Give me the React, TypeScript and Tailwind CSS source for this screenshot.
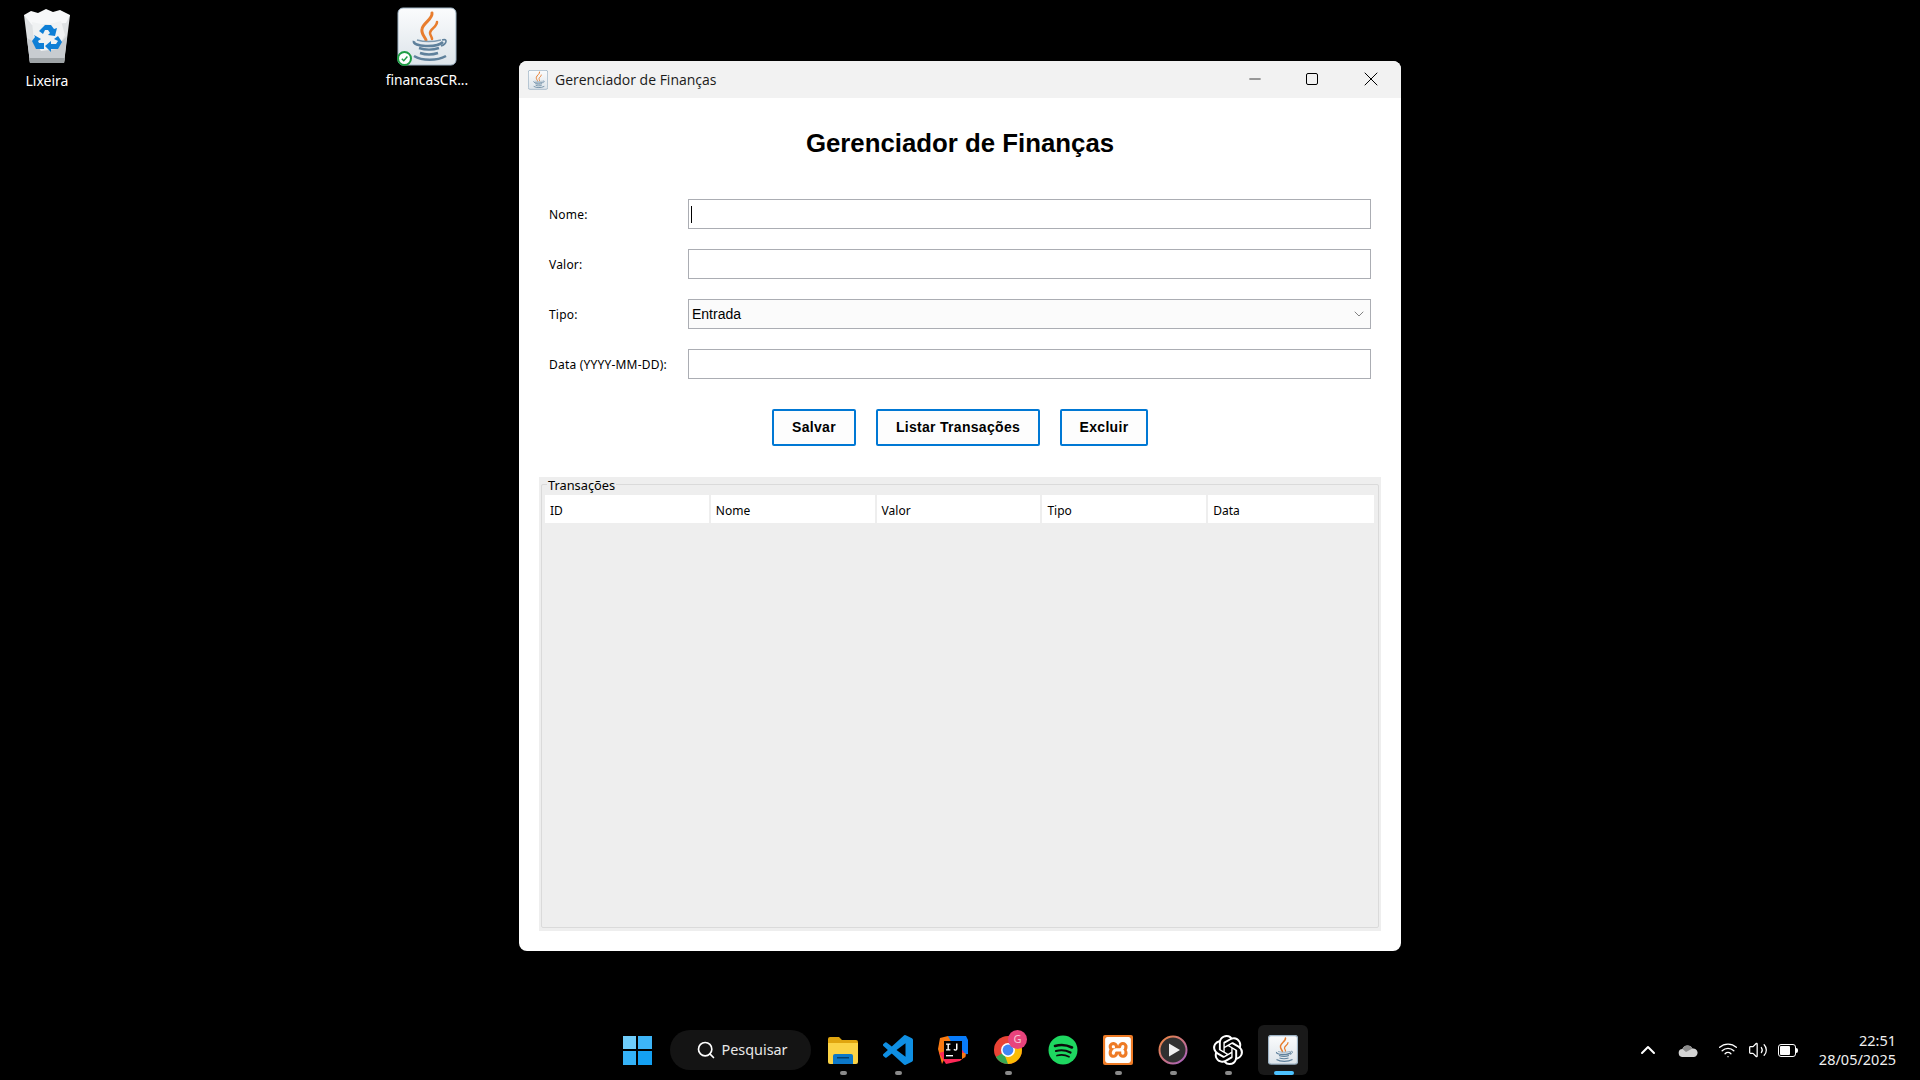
import React from "react";
import { SiOpenai, SiXampp } from "react-icons/si";
import { Search, ChevronDown, Minus, X, Volume2, Wifi, ChevronUp } from "lucide-react";

const JavaTile = ({ size }: { size: number }) => (
  <svg width={size} height={size} viewBox="0 0 60 60">
    <defs>
      <linearGradient id="javaBg" x1="0" y1="0" x2="0" y2="1">
        <stop offset="0" stopColor="#fbfcfd" />
        <stop offset="1" stopColor="#dde4ea" />
      </linearGradient>
    </defs>
    <rect x="1" y="1" width="58" height="57" rx="5" fill="url(#javaBg)" stroke="#9fb4c5" strokeWidth={size < 40 ? 2.5 : 1} />
    <path d="M35 6C36 12 26 16 25 22 24 27 28 30 29 33" fill="none" stroke="#e87d2e" strokeWidth="3" strokeLinecap="round" />
    <path d="M40 15C40 20 33 22 33 26 33 28 35 30 35 32" fill="none" stroke="#e87d2e" strokeWidth="2.500" strokeLinecap="round" />
    <path d="M17 34C15 40 40 41 46 35" fill="none" stroke="#5f819c" strokeWidth="2.600" />
    <path d="M20 33C27 35 36 35 44 33" fill="none" stroke="#7e9ab0" strokeWidth="1.500" />
    <path d="M45 33C51 31 50 37 44 39" fill="none" stroke="#5f819c" strokeWidth="1.600" />
    <path d="M22 41C28 43 36 43 42 41" fill="none" stroke="#5f819c" strokeWidth="2.400" />
    <path d="M23 46C29 48 35 48 41 46" fill="none" stroke="#5f819c" strokeWidth="2.400" />
    <path d="M17 49C25 54 40 54 49 49" fill="none" stroke="#5f819c" strokeWidth="2.400" />
  </svg>
);

const RecycleBin = () => (
  <svg width="46" height="56" viewBox="0 0 46 56">
    <path d="M0 7 6 55h34l6-48z" fill="#dfe2e4" />
    <path d="M0 7l7-4 7 2 8-4 7 3 7-2 10 5-4 8-34 2z" fill="#f7f8f9" />
    <path d="M3 30 6 55h34l3-27-12 12-14-2z" fill="#c8ccd0" />
    <path d="M5 50h36l-1 5H6z" fill="#9ea3a6" />
    <path d="M8 14l14 3 15-4 4 14-8 14-16 2-7-10z" fill="#f0f2f3" />
    <path d="M15 23 21 17H27L30 21 33 20 31 28 24 27 26 25 24 22H21L19 26z" fill="#0f7fd6" />
    <path d="M10 27 17 31 14 33 15 35H20V41H12L8 33 11 29z" fill="#0f7fd6" />
    <path d="M34 28 38 34 34 41H27V44L21 38 27 33V36H32L34 33 30 31z" fill="#0f7fd6" />
  </svg>
);

const Chrome = () => (
  <svg width="30" height="30" viewBox="0 0 30 30">
    <circle cx="15" cy="15" r="14" fill="#ea4335" />
    <path d="M15 15 2.900 22A14 14 0 0 0 15 29l6-12z" fill="#34a853" />
    <path d="M15 15 27.100 8A14 14 0 0 1 15 29l-3-8z" fill="#fbbc04" />
    <circle cx="15" cy="15" r="7" fill="#fff" />
    <circle cx="15" cy="15" r="5.400" fill="#4285f4" />
  </svg>
);

const Spotify = () => (
  <svg width="30" height="30" viewBox="0 0 30 30">
    <circle cx="15" cy="15" r="14.500" fill="#1ed760" />
    <path d="M7 11c5-1.500 12-1 17 1.500" stroke="#0b0b0b" strokeWidth="2.600" fill="none" strokeLinecap="round" />
    <path d="M8 16c4.500-1.200 10-.8 14.500 1.500" stroke="#0b0b0b" strokeWidth="2.200" fill="none" strokeLinecap="round" />
    <path d="M9 20.500c4-1 8.500-.6 12 1.200" stroke="#0b0b0b" strokeWidth="1.800" fill="none" strokeLinecap="round" />
  </svg>
);

const Intellij = () => (
  <svg width="30" height="30" viewBox="0 0 30 30">
    <path d="M2 3 10 1l6 3L4 29 0 14z" fill="#f97a12" />
    <path d="M10 1h18l2 4v14l-10 1z" fill="#087cfa" />
    <path d="M1 18l7 11 14-3 6-6-6-8z" fill="#fe2857" />
    <path d="M22 18h5.500v4L22 25z" fill="#f97a12" />
    <rect x="6" y="6" width="18" height="18" fill="#000" />
    <rect x="8" y="20" width="7" height="1.400" fill="#fff" />
    <path d="M8 8.500h4.400v1.200h-1.500v4.600h1.500v1.200H8v-1.200h1.500V9.700H8zM18 8.500h1.500v5.300c0 1.300-.8 1.900-2 1.900-1 0-1.700-.4-2.100-1l1-.9c.3.400.6.600 1 .6.300 0 .6-.2.600-.7z" fill="#fff" />
  </svg>
);

const MediaPlayer = () => (
  <svg width="30" height="30" viewBox="0 0 30 30">
    <defs>
      <linearGradient id="mediaRing" x1="0" y1="0" x2="1" y2="1">
        <stop offset="0" stopColor="#f0883e" />
        <stop offset="1" stopColor="#a45fc4" />
      </linearGradient>
    </defs>
    <circle cx="15" cy="15" r="13.500" fill="#303030" stroke="url(#mediaRing)" strokeWidth="2" />
    <path d="M11 8.500 22 15l-11 6.500z" fill="#eeeeee" />
  </svg>
);

const Slot = ({ dot, active, children }: { dot?: boolean; active?: boolean; children: React.ReactNode }) => (
  <div className="relative flex h-[50px] w-[55px] items-center justify-center">
    {active && <div className="absolute left-[2.5px] top-0 h-[50px] w-[50px] rounded-md bg-[#191919]" />}
    <div className="relative flex items-center justify-center">{children}</div>
    {dot && <div className="absolute bottom-0 left-[24px] h-[4px] w-[7px] rounded-full bg-[#8a8a8a]" />}
    {active && <div className="absolute bottom-0 left-[18px] h-[4px] w-[20px] rounded-full bg-[#4cc2ff]" />}
  </div>
);

const Field = ({ label, children }: { label: string; children: React.ReactNode }) => (
  <div className="flex h-[30px] items-center">
    <span className="w-[139px] pt-[1px] font-['Noto_Sans',sans-serif] text-[12px] tracking-[0.2px] text-black">{label}</span>
    {children}
  </div>
);

const ActionButton = ({ label, width }: { label: string; width: string }) => (
  <button className={`${width} h-[37px] rounded-[2px] border-2 border-[#0078d4] bg-[#fdfdfd] font-['Liberation_Sans',sans-serif] text-[14px] font-bold tracking-[0.3px] text-black`}>
    {label}
  </button>
);

export default function App() {
  return (
    <div className="flex h-screen w-full flex-col overflow-hidden bg-black font-['Noto_Sans',sans-serif]">
      <div className="relative flex-1">
        <div className="absolute left-[1px] top-[8px] flex w-[92px] flex-col items-center">
          <RecycleBin />
          <span className="mt-[8px] text-[14px] leading-[18px] text-white">Lixeira</span>
        </div>
        <div className="absolute left-[377px] top-[7px] flex w-[100px] flex-col items-center">
          <div className="relative h-[60px] w-[60px]">
            <JavaTile size={60} />
            <div className="absolute bottom-[1px] left-0 flex h-[15px] w-[15px] items-center justify-center rounded-full border-2 border-[#1f9d45] bg-white">
              <svg width="9" height="9" viewBox="0 0 10 10">
                <path d="M2 5.200 4.200 7.400 8.200 2.800" fill="none" stroke="#1f9d45" strokeWidth="1.600" />
              </svg>
            </div>
          </div>
          <span className="mt-[4px] text-[13.8px] leading-[18px] text-white">financasCR...</span>
        </div>

        {/* janela */}
        <div className="absolute left-[519px] top-[61px] flex h-[890px] w-[882px] flex-col overflow-hidden rounded-lg bg-white">
          <div className="flex h-[37px] shrink-0 items-center bg-[#f2f2f2] pl-[9px]">
            <JavaTile size={20} />
            <span className="ml-[7px] font-['Open_Sans',sans-serif] text-[14px] text-[#1a1a1a]">Gerenciador de Finanças</span>
            <div className="ml-auto mb-[2px] flex items-center">
              <Minus className="mr-[42px] h-[18px] w-[18px] text-black" strokeWidth={1} />
              <div className="mr-[41px] h-[12px] w-[12px] rounded-[2px] border border-black" />
              <X className="mr-[18px] h-[24px] w-[24px] text-black" strokeWidth={1} />
            </div>
          </div>

          <div className="flex flex-1 flex-col">
            <h1 className="mt-[26px] mb-[37px] text-center font-['Liberation_Sans',sans-serif] text-[25.8px] font-bold leading-[38px] text-black">
              Gerenciador de Finanças
            </h1>

            <div className="flex flex-col gap-5 px-[30px]">
              <Field label="Nome:">
                <div className="flex h-[30px] flex-1 items-center border border-[#abadb3] bg-white pl-[2px]">
                  <div className="h-[17px] w-px bg-black" />
                </div>
              </Field>
              <Field label="Valor:">
                <div className="h-[30px] flex-1 border border-[#abadb3] bg-white" />
              </Field>
              <Field label="Tipo:">
                <div className="flex h-[30px] flex-1 items-center justify-between border border-[#abadb3] bg-[#fbfbfb] pl-[3px] pr-[3px] font-['Liberation_Sans',sans-serif] text-[14px] text-black">
                  Entrada
                  <ChevronDown className="h-[16px] w-[16px] text-[#555555]" strokeWidth={1.1} />
                </div>
              </Field>
              <Field label="Data (YYYY-MM-DD):">
                <div className="h-[30px] flex-1 border border-[#abadb3] bg-white" />
              </Field>
            </div>

            <div className="mt-[30px] flex justify-center gap-5">
              <ActionButton label="Salvar" width="w-[84px]" />
              <ActionButton label="Listar Transações" width="w-[164px]" />
              <ActionButton label="Excluir" width="w-[88px]" />
            </div>

            <div className="mx-[20px] mt-[31px] flex h-[454px] flex-col bg-[#eeeeee] pb-[3px] pl-[2px] pr-[2px] pt-[7px]">
              <div className="relative flex-1 rounded-[2px] border border-[#dadada] pl-[3px] pr-[4px] pt-[10px]">
                <span className="absolute left-[5px] top-[-8px] bg-[#eeeeee] px-[1px] text-[12.8px] leading-[17px] text-black">Transações</span>
                <div className="grid h-[28px] grid-cols-5 bg-white text-[12px] text-black">
                  {["ID", "Nome", "Valor", "Tipo", "Data"].map((col) => (
                    <div key={col} className="flex items-center border-r-2 border-[#eeeeee] pl-[5px] pt-[4px] last:border-r-0">
                      {col}
                    </div>
                  ))}
                </div>
              </div>
            </div>
          </div>
        </div>
      </div>

      {/* barra de tarefas */}
      <div className="flex h-[60px] shrink-0 items-start bg-black pl-[612px] pt-[5px]">
        <div className="flex h-[50px] w-[50px] items-center justify-center">
          <div className="grid h-[29px] w-[29px] grid-cols-2 gap-[1.500px]">
            <div className="bg-[#6fcdfb]" />
            <div className="bg-[#3db5f8]" />
            <div className="bg-[#35b2f7]" />
            <div className="bg-[#14a0f2]" />
          </div>
        </div>
        <div className="ml-[8px] mr-[4.500px] mt-[5px] flex h-[40px] w-[141px] items-center justify-center gap-[5px] rounded-full bg-[#141414] pl-[3px]">
          <Search className="h-[20px] w-[20px] text-white" strokeWidth={2} />
          <span className="text-[14.4px] text-[#e8e8e8]">Pesquisar</span>
        </div>

        <Slot dot>
          <svg width="32" height="28" viewBox="0 0 32 28">
            <path d="M1 3a2 2 0 0 1 2-2h9l3 3h14a2 2 0 0 1 2 2v4H1z" fill="#e0a50f" />
            <path d="M1 7h30v19a2 2 0 0 1-2 2H3a2 2 0 0 1-2-2z" fill="#fbd346" />
            <path d="M6 20a2 2 0 0 1 2-2h16a2 2 0 0 1 2 2v8H6z" fill="#0c78c9" />
            <rect x="10" y="21" width="12" height="1.500" fill="#05406e" />
          </svg>
        </Slot>
        <Slot dot>
          <svg width="30" height="30" viewBox="0 0 24 24">
            <path
              d="M23.15 2.587L18.21.21a1.494 1.494 0 0 0-1.705.29l-9.46 8.63-4.12-3.128a.999.999 0 0 0-1.276.057L.327 7.261A1 1 0 0 0 .326 8.74L3.899 12 .326 15.26a1 1 0 0 0 .001 1.479L1.65 17.94a.999.999 0 0 0 1.276.057l4.12-3.128 9.46 8.63a1.492 1.492 0 0 0 1.704.29l4.942-2.377A1.5 1.5 0 0 0 24 20.06V3.939a1.5 1.5 0 0 0-.85-1.352zm-5.146 14.861L10.826 12l7.178-5.448v10.896z"
              fill="#0f8fe3"
            />
          </svg>
        </Slot>
        <Slot>
          <Intellij />
        </Slot>
        <Slot dot>
          <Chrome />
          <div className="absolute left-[15px] top-[-5px] flex h-[19px] w-[19px] items-center justify-center rounded-full bg-[#e8437c] text-[11px] text-[#f5c9d8]">
            G
          </div>
        </Slot>
        <Slot>
          <Spotify />
        </Slot>
        <Slot dot>
          <div className="flex h-[30px] w-[30px] items-center justify-center rounded-[2px] bg-[#ee7b26]">
            <SiXampp className="h-[26px] w-[26px] text-white" />
          </div>
        </Slot>
        <Slot dot>
          <MediaPlayer />
        </Slot>
        <Slot dot>
          <SiOpenai className="h-[30px] w-[30px] text-white" />
        </Slot>
        <Slot active>
          <JavaTile size={30} />
        </Slot>

        <div className="ml-auto flex h-[50px] items-center pr-[24px] text-white">
          <ChevronUp className="h-[24px] w-[24px]" strokeWidth={2} />
          <svg className="ml-[18px]" width="20" height="13" viewBox="0 0 20 13">
            <path d="M5 13a4 4 0 0 1-.6-8A5.500 5.500 0 0 1 14.500 4.500 4.300 4.300 0 0 1 16 13z" fill="#d4d4d4" />
            <path d="M4.500 5A5.500 5.500 0 0 1 14.500 4.500L8 8z" fill="#8c8c8c" />
          </svg>
          <Wifi className="ml-[20px] h-[20px] w-[20px]" strokeWidth={1.6} />
          <Volume2 className="ml-[10px] h-[20px] w-[20px]" strokeWidth={1.5} />
          <div className="ml-[10px] flex items-center">
            <div className="flex h-[13px] w-[18px] items-center rounded-[3px] border border-white p-[1px]">
              <div className="h-full w-[10px] rounded-[1px] bg-white" />
            </div>
            <div className="h-[5px] w-[2px] rounded-r-sm bg-white" />
          </div>
          <div className="ml-[18px] flex w-[80px] flex-col items-end text-[14.5px] leading-[19px] text-[#f0f0f0]">
            <span>22:51</span>
            <span>28/05/2025</span>
          </div>
        </div>
      </div>
    </div>
  );
}
